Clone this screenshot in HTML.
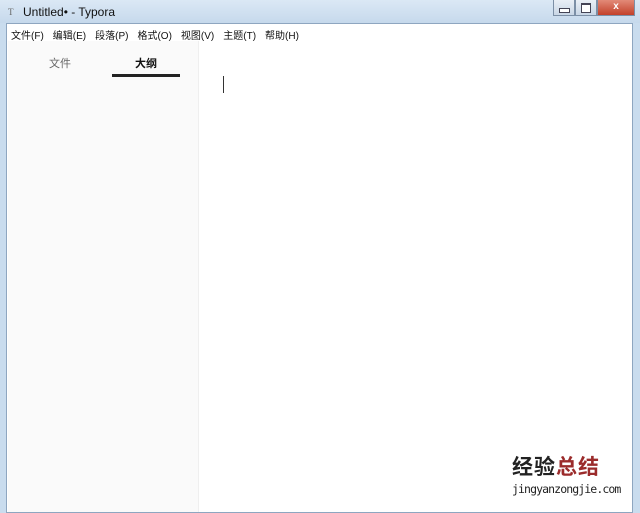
<!DOCTYPE html>
<html><head><meta charset="utf-8"><style>
*{margin:0;padding:0;box-sizing:border-box}
body{width:640px;height:504px;overflow:hidden;background:#c9dcee;font-family:"Liberation Sans","Noto Sans CJK SC",sans-serif;position:relative}
.title{position:absolute;left:0;top:0;width:640px;height:23px;background:linear-gradient(#dbe8f5,#c6d9ec)}
.title .t{position:absolute;left:23px;top:5px;font-size:12px;color:#111}
.title .ic{position:absolute;left:8px;top:7px;font-size:9px;color:#666;font-family:"Liberation Serif",serif}
.btns{position:absolute;left:553px;top:0;height:16px;display:flex}
.b{width:22px;height:16px;border:1px solid #7c8fa6;border-top:none;background:linear-gradient(#e9eff6,#c9d6e5)}
.b.x{width:38px;background:linear-gradient(#e28a78,#c3412a);color:#fff;font-size:10px;text-align:center;line-height:14px;font-weight:bold}
.b.m::after{content:"";display:block;width:9px;height:3px;border:1px solid #445;margin:8px auto 0;background:#fff}
.b.r::after{content:"";display:block;width:8px;height:7px;border:1px solid #445;border-top-width:2px;margin:3px auto 0;background:#fff}
.win{position:absolute;left:6px;top:23px;width:627px;height:490px;background:#fff;border:1px solid #8ea6c0;overflow:hidden}
.menu{height:17px;font-size:10px;color:#111;display:flex;gap:9px;padding-left:4px;padding-top:3px;background:#fff}
.side{position:absolute;left:1px;top:17px;width:191px;height:480px;background:#fafafa;border-right:1px solid #efefef}
.tab{position:absolute;top:14px;font-size:11px}
.ul{position:absolute;left:104px;top:33px;width:68px;height:3px;background:#222}
.cur{position:absolute;left:216px;top:52px;width:1px;height:17px;background:#333}
.wm{position:absolute;left:512px;top:452px;font-size:21px;font-weight:bold;letter-spacing:1px;color:#222;font-family:"Noto Sans CJK SC",sans-serif;line-height:28px}
.wm span{color:#9b2b2b}
.wm2{position:absolute;left:512px;top:482px;font-size:11.5px;color:#222;font-family:"DejaVu Sans Mono",monospace;letter-spacing:-0.9px}
</style></head><body>
<div class="title"><span class="ic">T</span><span class="t">Untitled• - Typora</span>
<div class="btns"><div class="b m"></div><div class="b r"></div><div class="b x">x</div></div></div>
<div class="win">
<div class="menu"><span>文件(F)</span><span>编辑(E)</span><span>段落(P)</span><span>格式(O)</span><span>视图(V)</span><span>主题(T)</span><span>帮助(H)</span></div>
<div class="side"><span class="tab" style="left:41px;color:#666">文件</span><span class="tab" style="left:127px;color:#111;font-weight:bold">大纲</span><div class="ul"></div></div>
<div class="cur"></div>
</div>
<div class="wm">经验<span>总结</span></div>
<div class="wm2">jingyanzongjie.com</div>
</body></html>
